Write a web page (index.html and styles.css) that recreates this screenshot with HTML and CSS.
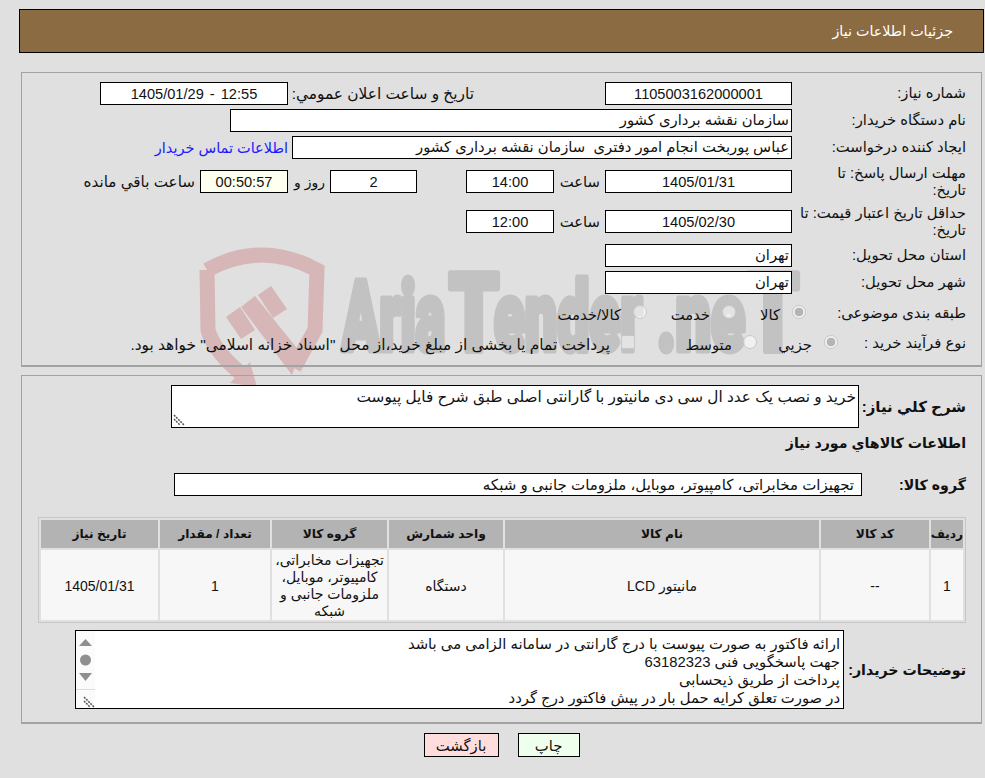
FILE: index.html
```html
<!DOCTYPE html>
<html lang="fa" dir="rtl">
<head>
<meta charset="utf-8">
<title>جزئیات اطلاعات نیاز</title>
<link rel="stylesheet" href="styles.css">
</head>
<body>
<svg class="watermark" viewBox="0 0 985 778" aria-hidden="true">
  <g class="wm-shield">
    <path class="wm-band" d="M207 270 Q262 240 317 270 L315 330 L294 368 M207 270 L208 330 Q214 352 244 376"/>
    <polygon points="226,317 240,307 255,330 241,339"/>
    <polygon points="241,307 255,296 300,352 292,375"/>
    <polygon points="258,295 271,286 287,309 273,318"/>
    <polygon points="250,362 257,387 230,383"/>
  </g>
  <text class="wm-text" x="342" y="350" textLength="103" lengthAdjust="spacingAndGlyphs">Aria</text>
  <text class="wm-text wm-big" x="449" y="350" textLength="50" lengthAdjust="spacingAndGlyphs">T</text>
  <text class="wm-text" x="494" y="350" textLength="148" lengthAdjust="spacingAndGlyphs">ender</text>
  <text class="wm-text" x="657" y="350" textLength="88" lengthAdjust="spacingAndGlyphs">.ne</text>
  <text class="wm-text wm-big" x="747" y="350" textLength="52" lengthAdjust="spacingAndGlyphs">T</text>
</svg>
<main class="page">
  <header class="title-bar"><h1>جزئیات اطلاعات نیاز</h1></header>

  <section class="panel panel-top">
    <div class="row">
      <label class="lbl lbl-main">شماره نیاز:</label>
      <div class="box box-lg center">1105003162000001</div>
      <label class="lbl lbl-date">تاريخ و ساعت اعلان عمومي:</label>
      <div class="box box-lg center box-stamp">12:55 - 1405/01/29</div>
    </div>
    <div class="row">
      <label class="lbl lbl-main">نام دستگاه خریدار:</label>
      <div class="box box-buyer">سازمان نقشه برداری کشور</div>
    </div>
    <div class="row">
      <label class="lbl lbl-main">ایجاد کننده درخواست:</label>
      <div class="box box-creator">عباس پوربخت انجام امور دفتری&nbsp; سازمان نقشه برداری کشور</div>
      <a class="contact" href="#">اطلاعات تماس خریدار</a>
    </div>
    <div class="row tall">
      <label class="lbl lbl-main">مهلت ارسال پاسخ: تا<br>تاریخ:</label>
      <div class="box box-lg center">1405/01/31</div>
      <span class="lbl lbl-hour">ساعت</span>
      <div class="box box-sm center">14:00</div>
      <div class="box box-days center">2</div>
      <span class="lbl lbl-dayand">روز و</span>
      <div class="box box-sm box-timer center">00:50:57</div>
      <span class="lbl lbl-remain">ساعت باقي مانده</span>
    </div>
    <div class="row tall">
      <label class="lbl lbl-main">حداقل تاریخ اعتبار قیمت: تا<br>تاریخ:</label>
      <div class="box box-lg center">1405/02/30</div>
      <span class="lbl lbl-hour">ساعت</span>
      <div class="box box-sm center">12:00</div>
    </div>
    <div class="row after-tall">
      <label class="lbl lbl-main">استان محل تحویل:</label>
      <div class="box box-lg">تهران</div>
    </div>
    <div class="row">
      <label class="lbl lbl-main">شهر محل تحویل:</label>
      <div class="box box-lg">تهران</div>
    </div>
    <div class="row row-options row-subject">
      <label class="lbl lbl-subject">طبقه بندی موضوعی:</label>
      <span class="opt opt-goods"><input class="radio" type="radio" name="subject" checked disabled><span>کالا</span></span>
      <span class="opt opt-service"><input class="radio" type="radio" name="subject" disabled><span>خدمت</span></span>
      <span class="opt"><input class="radio" type="radio" name="subject" disabled><span>کالا/خدمت</span></span>
    </div>
    <div class="row row-options row-process">
      <label class="lbl lbl-process">نوع فرآیند خرید :</label>
      <span class="opt opt-small"><input class="radio" type="radio" name="process" checked disabled><span>جزيي</span></span>
      <span class="opt opt-medium"><input class="radio" type="radio" name="process" disabled><span>متوسط</span></span>
      <span class="opt opt-note"><input class="check" type="checkbox" disabled><span>پرداخت تمام یا بخشی از مبلغ خرید،از محل "اسناد خزانه اسلامی" خواهد بود.</span></span>
    </div>
  </section>

  <section class="panel panel-bottom">
    <div class="row row-desc">
      <label class="lbl-bold lbl-desc">شرح کلي نياز:</label>
      <div class="desc">خرید و نصب یک عدد ال سی دی مانیتور با گارانتی اصلی طبق شرح فایل پیوست<svg class="grip-icon" width="12" height="12" viewBox="0 0 12 12"><path class="grip" d="M1 1 L11 11 M1 5 L7 11"/></svg></div>
    </div>
    <h2 class="lbl-bold section-title">اطلاعات کالاهاي مورد نياز</h2>
    <div class="row row-group">
      <label class="lbl-bold lbl-group">گروه کالا:</label>
      <div class="box box-group">تجهیزات مخابراتی، کامپیوتر، موبایل، ملزومات جانبی و شبکه</div>
    </div>
    <table class="items">
      <colgroup>
        <col class="c1"><col class="c2"><col class="c3"><col class="c4"><col class="c5"><col class="c6"><col class="c7">
      </colgroup>
      <thead>
        <tr><th>ردیف</th><th>کد کالا</th><th>نام کالا</th><th>واحد شمارش</th><th>گروه کالا</th><th>تعداد / مقدار</th><th>تاریخ نیاز</th></tr>
      </thead>
      <tbody>
        <tr><td>1</td><td>--</td><td>مانیتور LCD</td><td>دستگاه</td><td>تجهیزات مخابراتی، کامپیوتر، موبایل، ملزومات جانبی و شبکه</td><td>1</td><td>1405/01/31</td></tr>
      </tbody>
    </table>
    <div class="row row-notes">
      <label class="lbl-bold lbl-notes">توضیحات خریدار:</label>
      <div class="notes">
        <div class="notes-text">ارائه فاکتور به صورت پیوست با درج گارانتی در سامانه الزامی می باشد<br>جهت پاسخگویی فنی 63182323<br>پرداخت از طریق ذیحسابی<br>در صورت تعلق کرایه حمل بار در پیش فاکتور درج گردد</div>
        <div class="notes-scroll" aria-hidden="true">
          <svg class="scroll-icon" width="19" height="58" viewBox="0 0 19 58">
            <path d="M3 15 L9.5 8 L16 15 Z"/>
            <circle cx="9.5" cy="29" r="5.5"/>
            <path d="M3 42 L16 42 L9.5 50 Z"/>
          </svg>
          <div class="scroll-corner">
            <svg width="12" height="12" viewBox="0 0 12 12"><path class="grip" d="M1 1 L11 11 M1 5 L7 11"/></svg>
          </div>
        </div>
      </div>
    </div>
  </section>

  <div class="actions">
    <button class="btn btn-back" type="button">بازگشت</button>
    <button class="btn btn-print" type="button">چاپ</button>
  </div>
</main>
</body>
</html>
```
FILE: styles.css
```css
html, body { margin: 0; padding: 0; }
body {
  width: 985px;
  height: 778px;
  overflow: hidden;
  background: #e0e0e0;
  color: #111;
  font-family: "Liberation Sans", "DejaVu Sans", sans-serif;
  font-size: 14.8px;
  position: relative;
}
.watermark { position: absolute; left: 0; top: 0; width: 985px; height: 778px; direction: ltr; }
.wm-shield polygon { fill: #d6b6b6; }
.wm-band { fill: none; stroke: #d6b6b6; stroke-width: 15; }
.wm-text { font-family: "Roboto", sans-serif; font-weight: 900; font-size: 96px; fill: #c2c2c2; stroke: #c2c2c2; stroke-width: 7px; stroke-linejoin: round; }
.wm-big { font-size: 108px; }
.page { position: relative; padding: 9px 1px 0 1px; }
.title-bar {
  margin-left: 18px;
  height: 44px;
  box-sizing: border-box;
  border: 1px solid #000;
  background: #8b6b42;
  display: flex;
  align-items: center;
  padding-right: 30px;
}
.title-bar h1 { margin: 0; font-size: 14.3px; font-weight: 400; color: #fff; }
.panel {
  margin: 0 2px 0 0;
  margin-left: 20px;
  border: 1px solid #a2a2a2;
  border-bottom-width: 2px;
  box-sizing: border-box;
}
.panel-top { margin-top: 19px; height: 295px; padding: 9px 15px 0 0; display: flex; flex-direction: column; gap: 4px; }
.panel-bottom { margin-top: 8px; height: 349px; padding: 9px 15px 0 15px; }
.row { display: flex; align-items: center; min-height: 23px; }
.tall { height: 33px; margin: 2px 0 1px; }
.after-tall { margin-top: 1px; }
.lbl { white-space: nowrap; }
.lbl-main { width: 171px; margin-left: 3px; white-space: normal; line-height: 17px; }
.lbl-date { margin-right: 131px; width: 181px; margin-left: 5px; font-size: 15.4px; }
.lbl-hour { width: 42px; margin-right: 5px; margin-left: 4px; }
.lbl-dayand { width: 28px; margin-right: 5px; margin-left: 9px; font-size: 14px; }
.lbl-remain { margin-right: 5px; font-size: 15.2px; }
.box {
  box-sizing: border-box;
  height: 23px;
  line-height: 21px;
  border: 1px solid #000;
  background: #fff;
  padding: 0 2px;
  white-space: nowrap;
  overflow: hidden;
}
.center { text-align: center; font-size: 14.6px; line-height: 23px; }
.box-lg { width: 187px; flex: none; }
.box-sm { width: 88px; flex: none; }
.box-stamp { word-spacing: 2px; width: 188px; }
.box-days { width: 87px; flex: none; margin-right: 49px; }
.box-timer { background: #fffff0; }
.box-buyer { width: 562px; }
.box-creator { width: 500px; }
.contact { color: #1a1aff; text-decoration: none; margin-right: 4px; white-space: nowrap; font-size: 14.5px; }
.row-options { min-height: 24px; }
.row-subject { margin-top: 2px; }
.row-process { margin-top: 2px; }
.lbl-subject { width: 160px; }
.lbl-process { width: 128px; }
.opt { display: flex; align-items: center; gap: 12px; white-space: nowrap; }
.opt > span { padding-top: 5px; }
.opt-goods { width: 70px; }
.opt-service { width: 89px; }
.opt-small { width: 81px; gap: 12px; }
.opt-medium { width: 122px; gap: 11px; }
.opt-note { gap: 11px; font-size: 15.4px; }
.radio, .check {
  appearance: none;
  width: 14px;
  height: 14px;
  margin: 0;
  flex: none;
  background: rgba(255,255,255,.55);
  border: 1px solid #c8c8c8;
  box-sizing: border-box;
}
.radio { border-radius: 50%; }
.check { border-radius: 2px; }
.radio:checked { background: radial-gradient(circle, #b4b4b4 0 4px, #f0f0f0 4.6px); }
.row-desc { height: 43px; align-items: center; }
.lbl-bold { font-weight: 700; font-size: 14.2px; margin: 0; white-space: nowrap; }
.lbl-desc { width: 107px; font-size: 15px; }
.desc {
  position: relative;
  box-sizing: border-box;
  width: 688px;
  height: 43px;
  border: 1px solid #000;
  background: #fff;
  padding: 2px;
  line-height: 18px;
  font-size: 15.3px;
}
.grip-icon { position: absolute; left: 1px; bottom: 1px; }
.section-title { line-height: 22px; margin-top: 4px; }
.row-group { margin-top: 19px; }
.lbl-group { width: 104px; }
.box-group { width: 688px; padding-right: 7px; font-size: 15px; }
.items {
  margin-top: 21px;
  width: 928px;
  box-sizing: border-box;
  table-layout: fixed;
  border-collapse: separate;
  border-spacing: 2px;
  border: 1px solid #c6c6c6;
  height: 106px;
}
.c1 { width: 32px; } .c2 { width: 108px; } .c3 { width: 314px; } .c4 { width: 114px; } .c5 { width: 115px; } .c6 { width: 110px; } .c7 { width: 117px; }
.items th { background: #b3b3b3; height: 28px; padding: 0; font-size: 12.2px; font-weight: 700; white-space: nowrap; }
.items td { background: #f7f7f7; padding: 2px 3px 0; text-align: center; font-size: 14px; line-height: 17px; }
.row-notes { margin-top: 7px; align-items: center; }
.lbl-notes { width: 122px; }
.notes { box-sizing: border-box; width: 769px; height: 79px; border: 1px solid #000; background: #fff; display: flex; }
.notes-text { flex: 1; padding: 4px 3px 0; line-height: 18px; white-space: nowrap; overflow: hidden; }
.notes-scroll { width: 19px; background: #fbfbfb; display: flex; flex-direction: column; }
.scroll-icon { flex: none; fill: #8f8f8f; }
.scroll-corner { flex: 1; border-top: 1px solid #dcdcdc; display: flex; align-items: flex-end; }
.grip { stroke: #555; stroke-width: 1.5; stroke-dasharray: 2 1; fill: none; }
.actions { display: flex; justify-content: center; gap: 19px; margin-top: 9px; padding-left: 18px; }
.btn {
  box-sizing: border-box;
  height: 24px;
  border: 1px solid #000;
  border-radius: 0;
  font: inherit;
  color: inherit;
  padding: 0;
}
.btn-back { width: 75px; background: #ffdddd; order: 2; }
.btn-print { width: 62px; background: #eeffee; order: 1; }
```
